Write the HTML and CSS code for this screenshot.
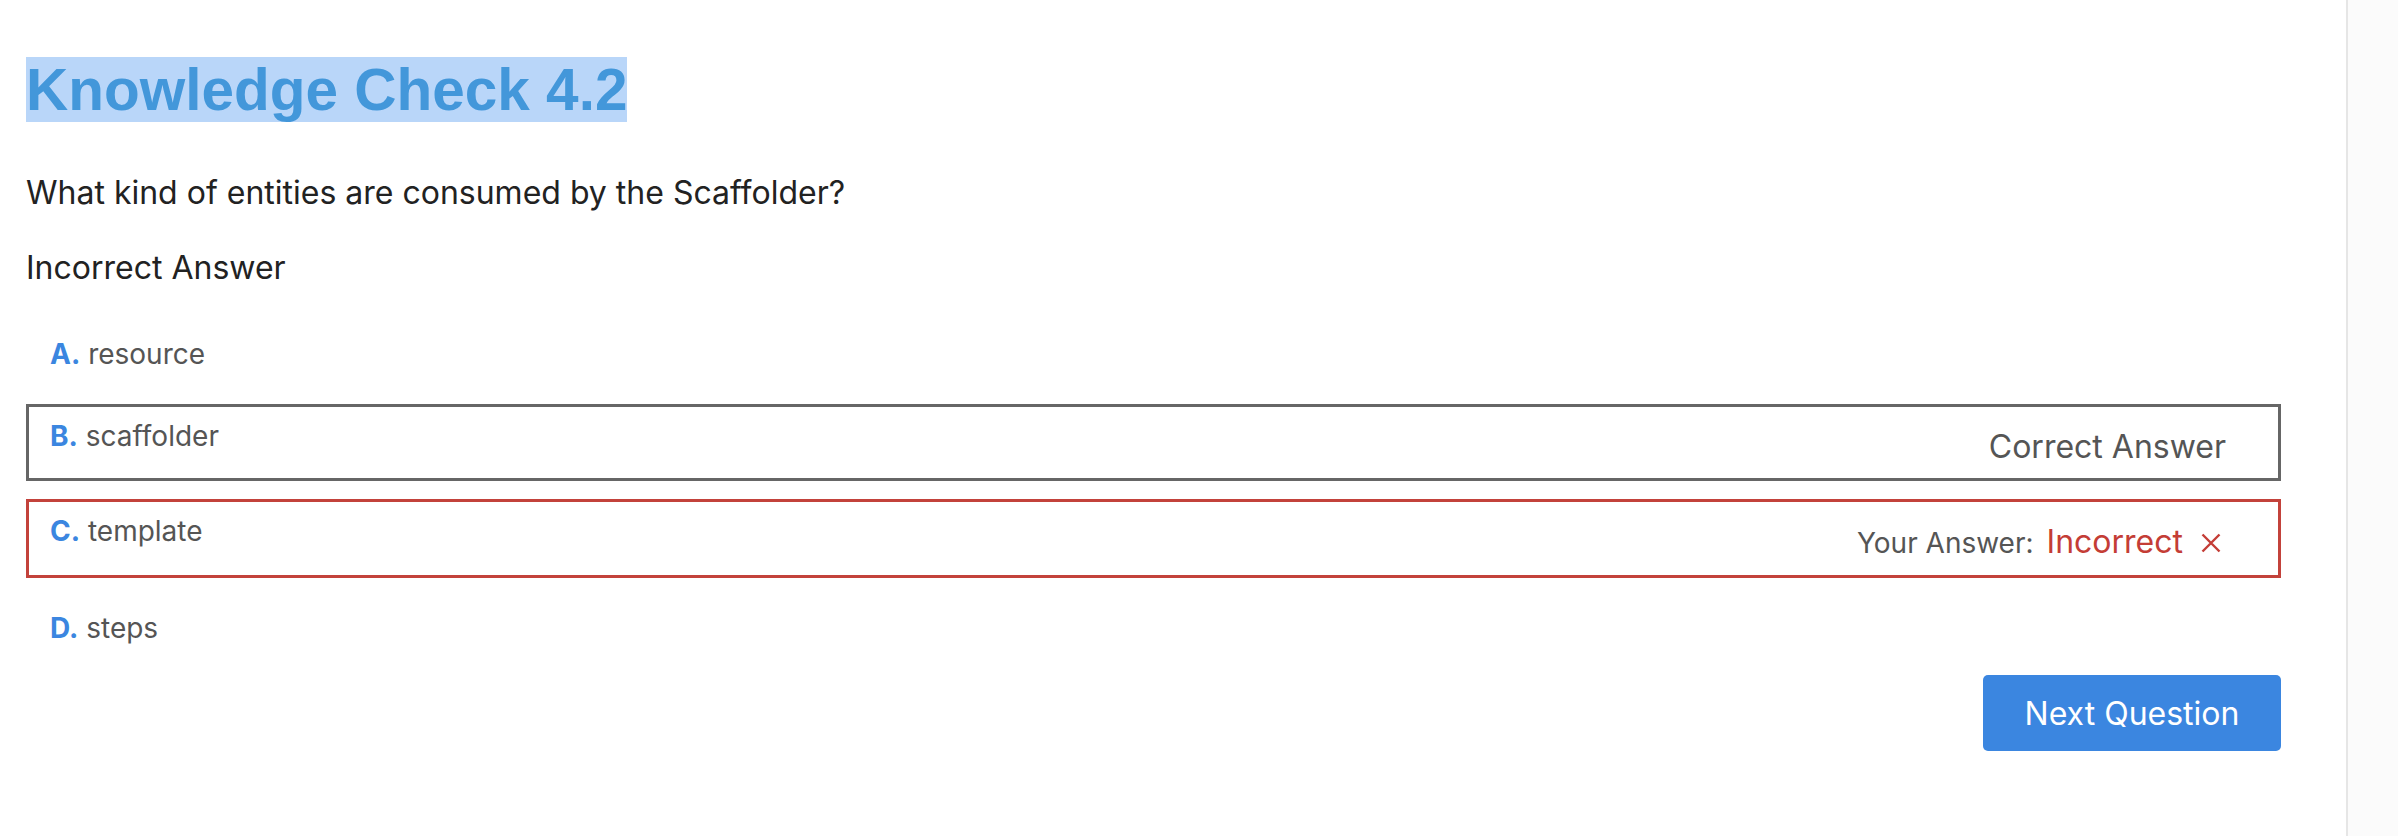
FILE: index.html
```html
<!DOCTYPE html>
<html lang="en">
<head>
    <meta charset="UTF-8">
    <meta name="viewport" content="width=device-width, initial-scale=1.0">
    <title>Knowledge Check 4.2</title>
    <link rel="stylesheet" href="styles.css">
</head>
<body>
    <div class="page">
        <main class="quiz">
            <h1><span class="selected">Knowledge Check 4.2</span></h1>
            <p class="question">What kind of entities are consumed by the Scaffolder?</p>
            <p class="verdict">Incorrect Answer</p>

            <ul class="options">
                <li class="option">
                    <span class="choice"><b>A.</b> resource</span>
                </li>
                <li class="option correct">
                    <span class="choice"><b>B.</b> scaffolder</span>
                    <span class="status">Correct Answer</span>
                </li>
                <li class="option wrong">
                    <span class="choice"><b>C.</b> template</span>
                    <span class="status">
                        <span class="yours">Your Answer:</span>
                        <span class="bad">Incorrect
                            <svg class="cross" width="22" height="22" viewBox="0 0 22 22">
                                <path d="M2.5 2.5 L19.5 19.5 M19.5 2.5 L2.5 19.5" stroke="#c43d36" stroke-width="2.4" fill="none"/>
                            </svg>
                        </span>
                    </span>
                </li>
                <li class="option">
                    <span class="choice"><b>D.</b> steps</span>
                </li>
            </ul>

            <div class="actions">
                <button class="next">Next Question</button>
            </div>
        </main>
        <aside class="side"></aside>
    </div>
</body>
</html>
```

FILE: styles.css
```css
body {
    margin: 0;
    font-family: Inter, "Noto Sans", sans-serif;
    background: #fff;
}
.page {
    display: flex;
    min-height: 836px;
}
.quiz {
    width: 2346px;
    box-sizing: border-box;
    padding: 54px 65px 0 26px;
}
.side {
    flex: 1;
    border-left: 2px solid #e6e6e6;
    background: #fbfbfb;
}
h1 {
    margin: 0;
    font-family: "Liberation Sans", Arial, sans-serif;
    font-size: 58.5px;
    font-weight: bold;
    line-height: 71px;
    color: #4397da;
}
.selected {
    background: #b9d6f9;
}
.question {
    margin: 51px 0 0;
    font-size: 32px;
    line-height: 34px;
    color: #222;
}
.verdict {
    margin: 41px 0 0;
    font-size: 32px;
    line-height: 34px;
    color: #222;
}
.options {
    list-style: none;
    margin: 37px 0 0;
    padding: 0;
    display: flex;
    flex-direction: column;
    gap: 18px;
}
.option {
    display: flex;
    justify-content: space-between;
    align-items: flex-start;
    padding: 12px 52px 12px 21px;
    border: 3px solid transparent;
    font-size: 28px;
    line-height: 34px;
    color: #555;
}
.option b {
    color: #3b86e0;
    font-weight: bold;
}
.correct {
    border-color: #666;
}
.wrong {
    border-color: #c3423b;
}
.status {
    margin-top: 8px;
    font-size: 32px;
    line-height: 39px;
    color: #555;
}
.yours {
    font-size: 28px;
    margin-right: 4px;
}
.bad {
    color: #c43d36;
}
.cross {
    margin-left: 8px;
    margin-right: 4px;
    vertical-align: -1px;
}
.actions {
    display: flex;
    justify-content: flex-end;
    margin-top: 15px;
}
.next {
    width: 298px;
    height: 76px;
    border: none;
    border-radius: 5px;
    background: #3b86e0;
    color: #fff;
    font-family: Inter, "Noto Sans", sans-serif;
    font-size: 32px;
}
```
